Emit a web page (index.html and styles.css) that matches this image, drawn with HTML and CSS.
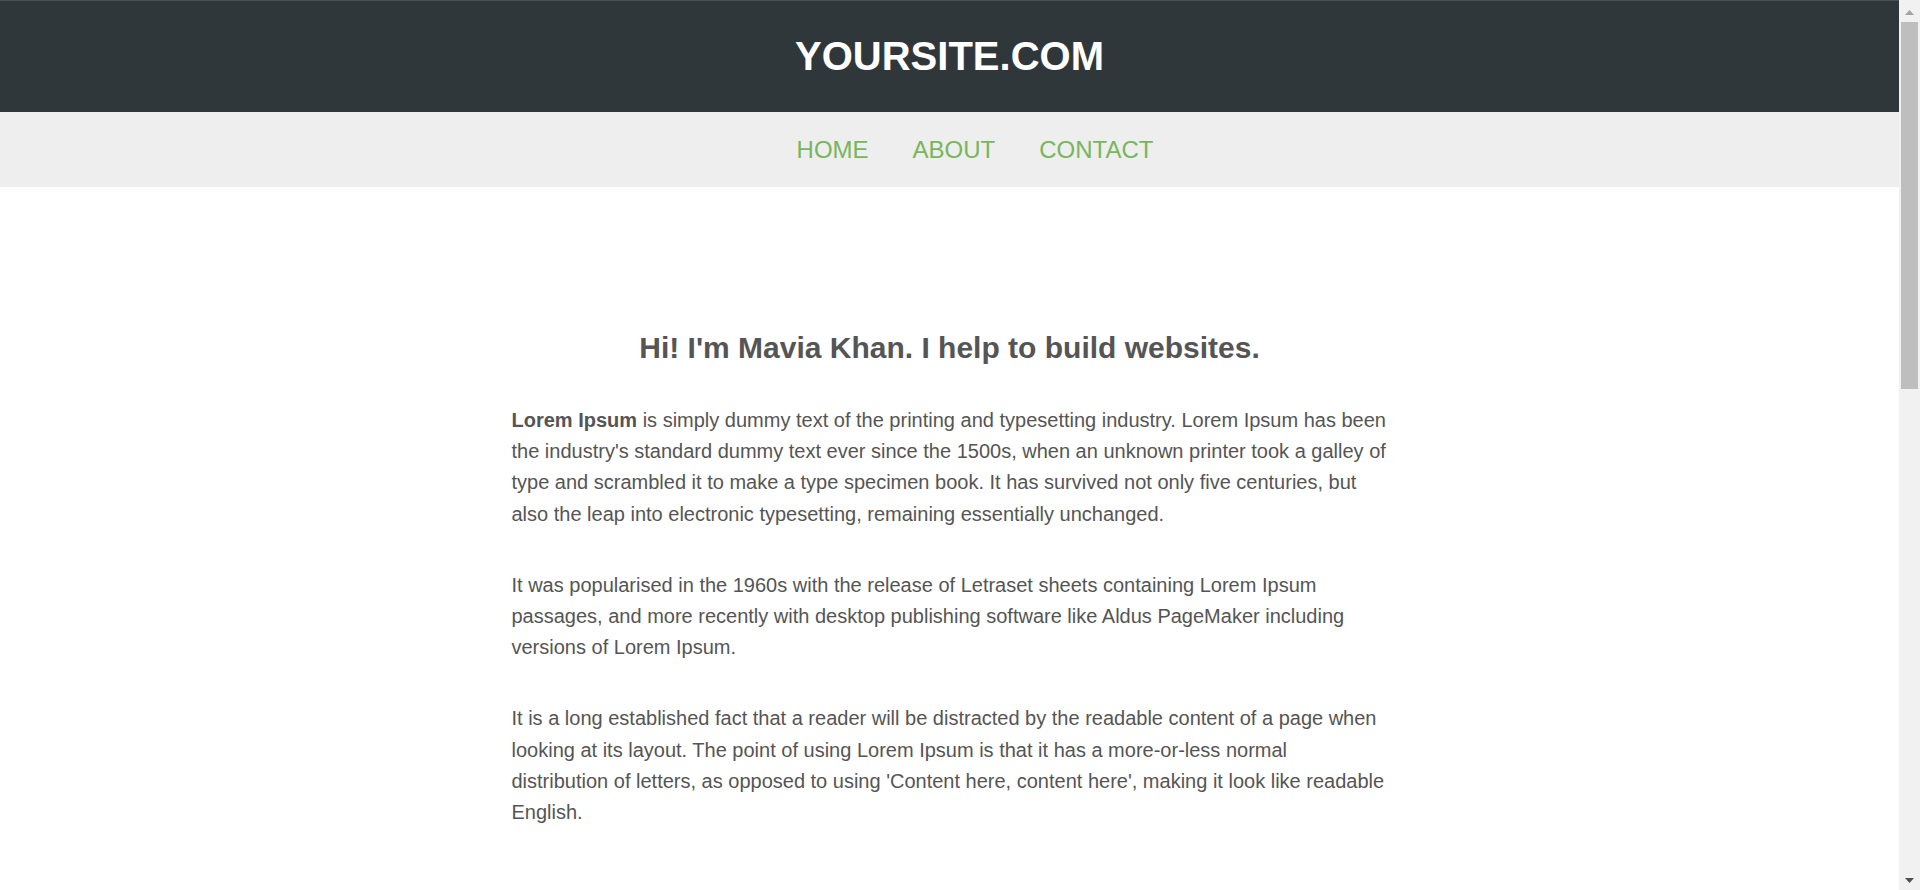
FILE: index.html
```html
<!DOCTYPE html>
<html lang="en">
<head>
<meta charset="utf-8">
<title>YOURSITE.COM</title>
<link rel="stylesheet" href="styles.css">
</head>
<body>
<header class="site-header">
  <h1 class="logo">YOURSITE.COM</h1>
</header>
<nav class="site-nav">
  <ul class="nav-list">
    <li><a class="nav-link" href="#">HOME</a></li>
    <li><a class="nav-link" href="#">ABOUT</a></li>
    <li><a class="nav-link" href="#">CONTACT</a></li>
  </ul>
</nav>
<main class="content">
  <div class="container">
    <h2 class="intro-title">Hi! I'm Mavia Khan. I help to build websites.</h2>
    <p class="text"><strong>Lorem Ipsum</strong> is simply dummy text of the printing and typesetting industry. Lorem Ipsum has been the industry's standard dummy text ever since the 1500s, when an unknown printer took a galley of type and scrambled it to make a type specimen book. It has survived not only five centuries, but also the leap into electronic typesetting, remaining essentially unchanged.</p>
    <p class="text">It was popularised in the 1960s with the release of Letraset sheets containing Lorem Ipsum passages, and more recently with desktop publishing software like Aldus PageMaker including versions of Lorem Ipsum.</p>
    <p class="text">It is a long established fact that a reader will be distracted by the readable content of a page when looking at its layout. The point of using Lorem Ipsum is that it has a more-or-less normal distribution of letters, as opposed to using 'Content here, content here', making it look like readable English.</p>
  </div>
</main>
<div class="fake-scrollbar" aria-hidden="true">
  <svg class="sb-arrow sb-up" width="9" height="5" viewBox="0 0 9 5"><polygon points="4.5,0 9,5 0,5" fill="#a3a3a3"/></svg>
  <div class="sb-thumb"></div>
  <svg class="sb-arrow sb-down" width="9" height="5" viewBox="0 0 9 5"><polygon points="0,0 9,0 4.5,5" fill="#505050"/></svg>
</div>
</body>
</html>
```

FILE: styles.css
```css
html, body {
  margin: 0;
  padding: 0;
}

body {
  font-family: "Liberation Sans", Arial, Helvetica, sans-serif;
  color: #555555;
  background: #ffffff;
  margin-right: 21px;
  border-top: 1px solid #4b4f52;
}

.site-header {
  background: #30373a;
  padding: 35px 0 36px;
  text-align: center;
}

.logo {
  margin: 0;
  font-size: 40px;
  line-height: 40px;
  font-weight: bold;
  color: #ffffff;
}

.site-nav {
  background: #eeeeee;
  padding: 25px 0;
}

.nav-list {
  list-style: none;
  margin: 0;
  padding: 0 0 0 51px;
  display: flex;
  justify-content: center;
  gap: 44px;
}

.nav-link {
  display: block;
  font-size: 24px;
  line-height: 25px;
  color: #78b65c;
  text-decoration: none;
}

.content {
  box-sizing: border-box;
  min-height: 1873px;
  padding-top: 144px;
}

.container {
  width: 876px;
  margin: 0 auto;
}

.intro-title {
  margin: 0 0 40px;
  font-size: 30px;
  line-height: normal;
  font-weight: bold;
  text-align: center;
  color: #555555;
}

.text {
  margin: 0 0 40px;
  font-size: 20px;
  line-height: 31.2px;
}

.text strong {
  font-weight: bold;
}

.fake-scrollbar {
  position: fixed;
  top: 0;
  right: 0;
  bottom: 0;
  width: 21px;
  background: #f1f1f1;
}

.sb-arrow {
  position: absolute;
  left: 6px;
}

.sb-up {
  top: 10px;
}

.sb-down {
  bottom: 7px;
}

.sb-thumb {
  position: absolute;
  left: 2px;
  top: 22px;
  width: 17px;
  height: 367px;
  background: #bebebe;
}
```
